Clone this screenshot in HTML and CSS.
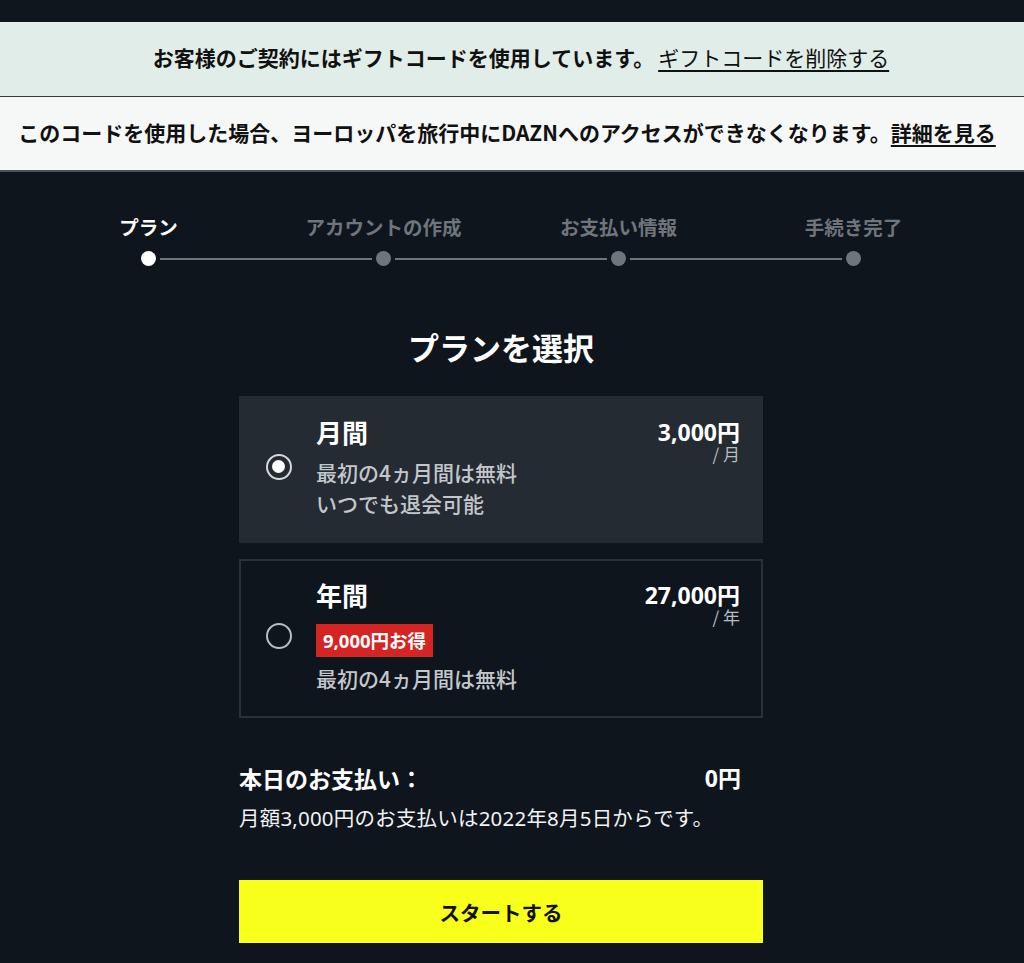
FILE: index.html
```html
<!DOCTYPE html>
<html lang="ja">
<head>
<meta charset="utf-8">
<title>プランを選択</title>
<link rel="stylesheet" href="styles.css">
</head>
<body>
<div class="topbar"></div>
<div class="banner banner-gift">
  <p>お客様のご契約にはギフトコードを使用しています。<a href="#" class="link-light">ギフトコードを削除する</a></p>
</div>
<div class="banner banner-warn">
  <p>このコードを使用した場合、ヨーロッパを旅行中にDAZNへのアクセスができなくなります。<a href="#" class="link-bold">詳細を見る</a></p>
</div>

<main class="main">
  <div class="stepper">
    <div class="step-labels">
      <span class="step-label active">プラン</span>
      <span class="step-label">アカウントの作成</span>
      <span class="step-label">お支払い情報</span>
      <span class="step-label">手続き完了</span>
    </div>
    <div class="step-track">
      <span class="dot active"></span>
      <span class="line"></span>
      <span class="dot"></span>
      <span class="line"></span>
      <span class="dot"></span>
      <span class="line"></span>
      <span class="dot"></span>
    </div>
  </div>

  <h1 class="title">プランを選択</h1>

  <div class="plans">
    <div class="plan selected">
      <div class="radio-col"><span class="radio on"></span></div>
      <div class="plan-body">
        <div class="plan-name">月間</div>
        <div class="plan-desc">最初の4ヵ月間は無料</div>
        <div class="plan-desc">いつでも退会可能</div>
      </div>
      <div class="plan-price">
        <div class="price">3,000円</div>
        <div class="per">/ 月</div>
      </div>
    </div>
    <div class="plan">
      <div class="radio-col"><span class="radio"></span></div>
      <div class="plan-body">
        <div class="plan-name">年間</div>
        <div class="badge">9,000円お得</div>
        <div class="plan-desc desc-after-badge">最初の4ヵ月間は無料</div>
      </div>
      <div class="plan-price">
        <div class="price">27,000円</div>
        <div class="per">/ 年</div>
      </div>
    </div>
  </div>

  <div class="summary">
    <div class="today">
      <span>本日のお支払い：</span>
      <span class="today-amount">0円</span>
    </div>
    <p class="note">月額3,000円のお支払いは2022年8月5日からです。</p>
  </div>

  <button class="start">スタートする</button>
</main>
</body>
</html>
```

FILE: styles.css
```css
* { box-sizing: border-box; }
html, body { margin: 0; padding: 0; }
body {
  background: #0e151d;
  color: #fff;
  font-family: "Noto Sans", "Noto Sans CJK JP", sans-serif;
}
.topbar { height: 22px; background: #0f161e; }
.banner p { margin: 0; }
.banner {
  display: flex;
  align-items: center;
  justify-content: center;
  color: #111;
  font-family: "Noto Sans CJK JP", sans-serif;
  font-weight: 700;
  font-size: 21px;
  padding-bottom: 4px;
}
.banner-gift {
  height: 75px;
  background: #e1ede9;
  border-bottom: 1px solid #333a40;
  padding-left: 18px;
}
.banner-warn {
  height: 75px;
  background: #f6f8f8;
  border-bottom: 2px solid #4b5157;
  padding-right: 10px;
}
.banner a { color: #111; text-decoration: underline; text-underline-offset: 4px; }
.link-light { font-weight: 400; margin-left: 4px; }
.link-bold { font-weight: 700; }

.main {
  padding: 0 22px 40px 0;
  display: flex;
  flex-direction: column;
  align-items: center;
}

.stepper { width: 940px; margin-top: 43px; }
.step-labels {
  display: grid;
  grid-template-columns: repeat(4, 1fr);
  font-family: "Noto Sans CJK JP", sans-serif;
  font-weight: 700;
  font-size: 19.5px;
  line-height: 24px;
  text-align: center;
  color: #6f757b;
}
.step-label.active { color: #fff; }
.step-track {
  width: 720px;
  margin: 12px auto 0;
  display: flex;
  align-items: center;
  gap: 4px;
}
.dot {
  width: 15px; height: 15px; border-radius: 50%;
  background: #6f757b;
  flex: none;
}
.dot.active { background: #fff; }
.line { flex: 1; height: 2px; background: #6f757b; }

.title {
  margin: 61px 0 0;
  font-family: "Noto Sans CJK JP", sans-serif;
  font-size: 31px;
  line-height: 40px;
  font-weight: 700;
}

.plans {
  width: 524px;
  margin-top: 29px;
  display: flex;
  flex-direction: column;
  gap: 16px;
}
.plan {
  display: flex;
  border: 2px solid #2a3139;
  padding: 16px 21px 22px 0;
}
.plan.selected {
  background: #242b33;
  border-color: #242b33;
}
.radio-col {
  width: 75px;
  flex: none;
  display: flex;
  align-items: center;
  justify-content: center;
}
.radio {
  width: 26px; height: 26px;
  border: 2px solid #b9bdc1;
  border-radius: 50%;
  display: flex; align-items: center; justify-content: center;
}
.radio.on { border-color: #d6d9dc; }
.radio.on::after {
  content: "";
  width: 13px; height: 13px; border-radius: 50%;
  background: #fff;
}
.plan-body { flex: 1; font-family: "Noto Sans CJK JP", sans-serif; }
.plan-name {
  font-size: 26px;
  line-height: 36px;
  font-weight: 700;
  margin-bottom: 7px;
}
.plan-desc {
  font-size: 21px;
  line-height: 31px;
  font-weight: 500;
  color: #c3c7cb;
}
.badge {
  display: inline-block;
  margin-top: 4px;
  background: #d42424;
  color: #fff;
  font-family: "Noto Sans", "Noto Sans CJK JP", sans-serif;
  font-weight: 700;
  font-size: 18.5px;
  line-height: 33px;
  padding: 0 7px;
}
.desc-after-badge { margin-top: 6px; }
.plan-price { text-align: right; }
.price {
  font-size: 23px;
  line-height: 28px;
  font-weight: 700;
  margin-top: 4px;
}
.per {
  font-size: 17px;
  line-height: 16px;
  margin-top: 0;
  color: #b9bdc1;
  font-family: "Noto Sans CJK JP", sans-serif;
}

.summary { width: 524px; margin-top: 43px; }
.today {
  display: flex;
  justify-content: space-between;
  padding-right: 22px;
  font-family: "Noto Sans CJK JP", sans-serif;
  font-size: 23px;
  line-height: 34px;
  font-weight: 700;
}
.today-amount { font-family: "Noto Sans", "Noto Sans CJK JP", sans-serif; }
.note {
  margin: 9px 0 0;
  font-size: 20.5px;
  line-height: 28px;
  letter-spacing: 0.2px;
  color: #f2f3f4;
}

.start {
  width: 524px;
  height: 63px;
  margin-top: 48px;
  border: none;
  background: #f8ff1a;
  color: #111;
  font-family: "Noto Sans CJK JP", sans-serif;
  font-weight: 700;
  font-size: 20.5px;
  cursor: pointer;
}
```
